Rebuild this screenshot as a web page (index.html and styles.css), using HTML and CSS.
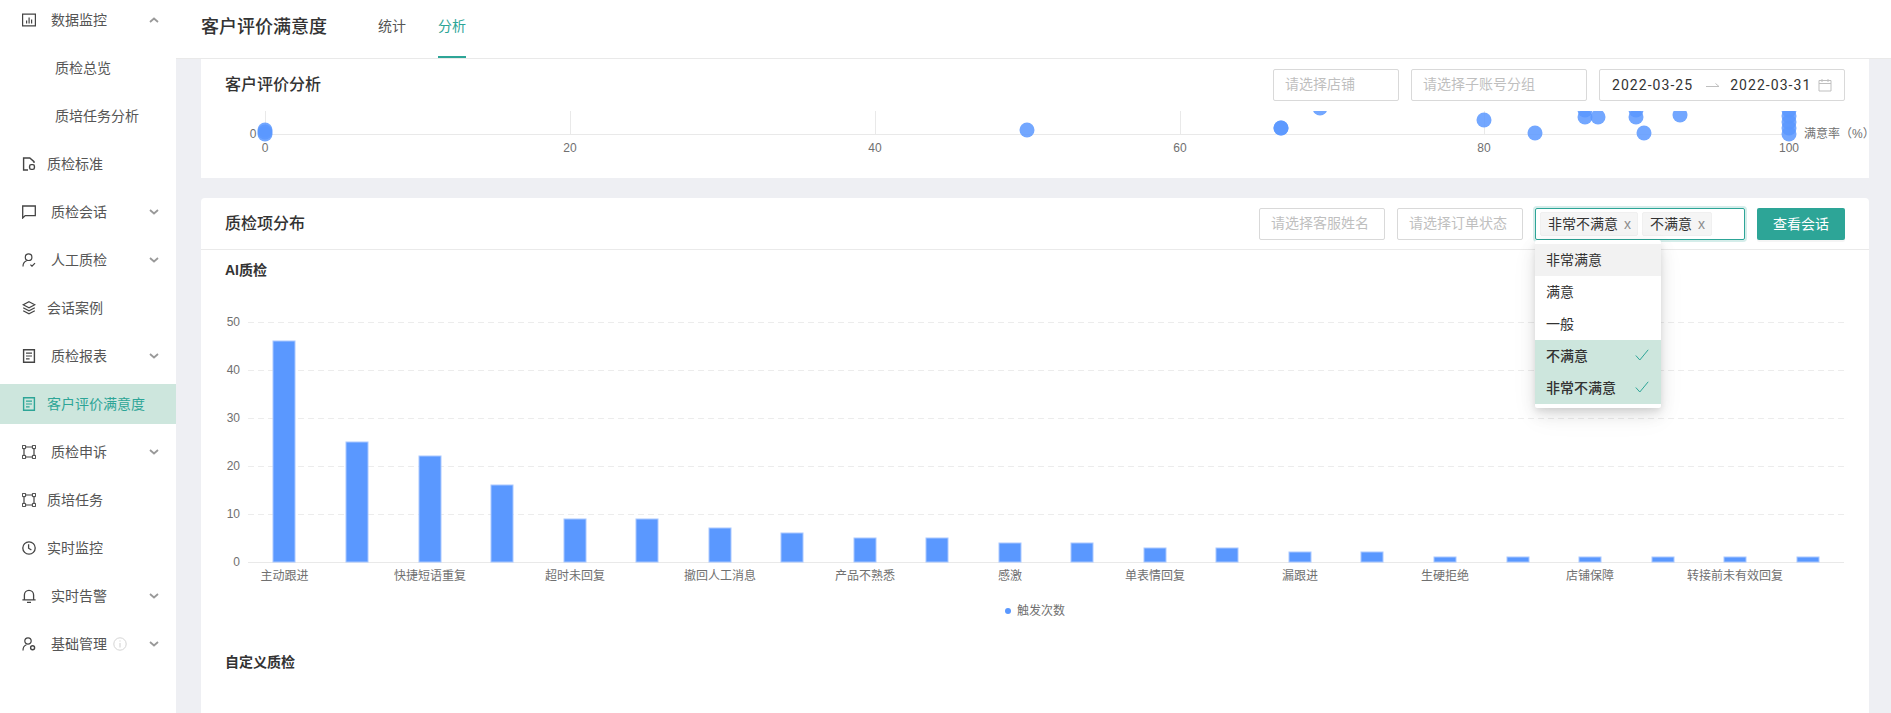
FILE: index.html
```html
<!DOCTYPE html>
<html lang="zh-CN">
<head>
  <meta charset="UTF-8">
  <meta name="viewport" content="width=device-width, initial-scale=1.0">
  <title>客户评价满意度</title>
  <link rel="stylesheet" href="styles.css">
</head>
<body>

  <!-- Sidebar -->
  <aside class="sidebar">
    <div class="menu-item has-sub">
      <svg class="menu-icon" viewBox="0 0 14 14"><path d="M.6 1.2h12.8v11.6H.6z" fill="none" stroke="currentColor" stroke-width="1.2"/><path d="M4 7.5h1.2v3H4zM6.5 4.5h1.2v6H6.5zM9 6.5h1.2v4H9z" fill="currentColor"/></svg>
      <span class="menu-label">数据监控</span>
      <svg class="chevron" viewBox="0 0 10 6"><path d="M1 5l4-3.5L9 5" fill="none" stroke="currentColor" stroke-width="1.8"/></svg>
    </div>
    <div class="menu-item sub-item"><span class="menu-label">质检总览</span></div>
    <div class="menu-item sub-item"><span class="menu-label">质培任务分析</span></div>
    <div class="menu-item">
      <svg class="menu-icon" viewBox="0 0 14 14"><path d="M6 13H1.6V1h6.2L12 4.6V6" fill="none" stroke="currentColor" stroke-width="1.4"/><rect x="7.6" y="7.6" width="4.8" height="4.8" rx="1.6" fill="none" stroke="currentColor" stroke-width="1.4"/></svg>
      <span class="menu-label">质检标准</span>
    </div>
    <div class="menu-item has-sub">
      <svg class="menu-icon" viewBox="0 0 14 14"><path d="M.7 13V1h12.6v9.6H3.2L.7 13z" fill="none" stroke="currentColor" stroke-width="1.3"/></svg>
      <span class="menu-label">质检会话</span>
      <svg class="chevron" viewBox="0 0 10 6"><path d="M1 1l4 3.5L9 1" fill="none" stroke="currentColor" stroke-width="1.8"/></svg>
    </div>
    <div class="menu-item has-sub">
      <svg class="menu-icon" viewBox="0 0 14 14"><circle cx="6.6" cy="4.2" r="3.3" fill="none" stroke="currentColor" stroke-width="1.2"/><path d="M1 13.4c0-3 1.6-4.8 3.6-5.6M8.4 11.6l1.6 1.6 3-3" fill="none" stroke="currentColor" stroke-width="1.2"/></svg>
      <span class="menu-label">人工质检</span>
      <svg class="chevron" viewBox="0 0 10 6"><path d="M1 1l4 3.5L9 1" fill="none" stroke="currentColor" stroke-width="1.8"/></svg>
    </div>
    <div class="menu-item">
      <svg class="menu-icon" viewBox="0 0 14 14"><path d="M7 .8l5.8 3L7 6.8l-5.8-3L7 .8z" fill="none" stroke="currentColor" stroke-width="1.2"/><path d="M1.2 6.8L7 9.8l5.8-3M1.2 9.8L7 12.9l5.8-3.1" fill="none" stroke="currentColor" stroke-width="1.2"/></svg>
      <span class="menu-label">会话案例</span>
    </div>
    <div class="menu-item has-sub">
      <svg class="menu-icon" viewBox="0 0 14 14"><path d="M1.6.8h10.8v12.4H1.6z" fill="none" stroke="currentColor" stroke-width="1.4"/><path d="M4 4.2h6M4 7h6M4 9.8h3.6" fill="none" stroke="currentColor" stroke-width="1.2"/></svg>
      <span class="menu-label">质检报表</span>
      <svg class="chevron" viewBox="0 0 10 6"><path d="M1 1l4 3.5L9 1" fill="none" stroke="currentColor" stroke-width="1.8"/></svg>
    </div>
    <div class="menu-item active">
      <svg class="menu-icon" viewBox="0 0 14 14"><path d="M1.6.8h10.8v12.4H1.6z" fill="none" stroke="currentColor" stroke-width="1.4"/><path d="M4 4.2h6M4 7h6M4 9.8h3.6" fill="none" stroke="currentColor" stroke-width="1.2"/></svg>
      <span class="menu-label">客户评价满意度</span>
    </div>
    <div class="menu-item has-sub">
      <svg class="menu-icon" viewBox="0 0 14 14"><path d="M2 2h10v10H2z" fill="none" stroke="currentColor" stroke-width="1.2"/><path d="M.4.4h3.2v3.2H.4zM10.4.4h3.2v3.2h-3.2zM.4 10.4h3.2v3.2H.4zM10.4 10.4h3.2v3.2h-3.2z" fill="#fff" stroke="currentColor" stroke-width="1"/></svg>
      <span class="menu-label">质检申诉</span>
      <svg class="chevron" viewBox="0 0 10 6"><path d="M1 1l4 3.5L9 1" fill="none" stroke="currentColor" stroke-width="1.8"/></svg>
    </div>
    <div class="menu-item">
      <svg class="menu-icon" viewBox="0 0 14 14"><path d="M2 2h10v10H2z" fill="none" stroke="currentColor" stroke-width="1.2"/><path d="M.4.4h3.2v3.2H.4zM10.4.4h3.2v3.2h-3.2zM.4 10.4h3.2v3.2H.4zM10.4 10.4h3.2v3.2h-3.2z" fill="#fff" stroke="currentColor" stroke-width="1"/></svg>
      <span class="menu-label">质培任务</span>
    </div>
    <div class="menu-item">
      <svg class="menu-icon" viewBox="0 0 14 14"><circle cx="7" cy="7" r="6.2" fill="none" stroke="currentColor" stroke-width="1.3"/><path d="M6.6 3.2v4l2.8 1.8" fill="none" stroke="currentColor" stroke-width="1.3"/></svg>
      <span class="menu-label">实时监控</span>
    </div>
    <div class="menu-item has-sub">
      <svg class="menu-icon" viewBox="0 0 14 14"><path d="M2.4 10.6V6a4.6 4.6 0 0 1 9.2 0v4.6M.4 10.8h13.2M5 13.4h4" fill="none" stroke="currentColor" stroke-width="1.3"/></svg>
      <span class="menu-label">实时告警</span>
      <svg class="chevron" viewBox="0 0 10 6"><path d="M1 1l4 3.5L9 1" fill="none" stroke="currentColor" stroke-width="1.8"/></svg>
    </div>
    <div class="menu-item has-sub">
      <svg class="menu-icon" viewBox="0 0 14 14"><circle cx="6" cy="4" r="3.2" fill="none" stroke="currentColor" stroke-width="1.2"/><path d="M1 13.4c0-3 1.4-4.8 3.4-5.6" fill="none" stroke="currentColor" stroke-width="1.2"/><circle cx="10.6" cy="10.8" r="2" fill="none" stroke="currentColor" stroke-width="1.4"/></svg>
      <span class="menu-label">基础管理</span>
      <svg class="info-icon" viewBox="0 0 14 14"><circle cx="7" cy="7" r="6.2" fill="none" stroke="currentColor"/><path d="M7 6v4.4M7 3.4v1.2" fill="none" stroke="currentColor" stroke-width="1.1"/></svg>
      <svg class="chevron" viewBox="0 0 10 6"><path d="M1 1l4 3.5L9 1" fill="none" stroke="currentColor" stroke-width="1.8"/></svg>
    </div>
  </aside>

  <div class="main">
    <!-- Top bar -->
    <header class="topbar">
      <div class="page-title">客户评价满意度</div>
      <nav class="tabs">
        <div class="tab">统计</div>
        <div class="tab tab-active">分析</div>
      </nav>
    </header>

    <div class="content">
      <!-- Satisfaction scatter -->
      <section class="card card-top">
        <div class="card-head">
          <div class="card-title">客户评价分析</div>
          <div class="filters">
            <input class="field field-shop" placeholder="请选择店铺">
            <input class="field field-group" placeholder="请选择子账号分组">
            <div class="date-range">
              <span>2022-03-25</span>
              <svg class="date-arrow" viewBox="0 0 14 6"><path d="M0 4.5h13L9.5 1.5" fill="none" stroke="currentColor"/></svg>
              <span>2022-03-31</span>
              <svg class="date-icon" viewBox="0 0 14 14"><path d="M1 2.5h12v10.500H1zM1 5.500h12M4 1v3M10 1v3" fill="none" stroke="currentColor"/></svg>
            </div>
          </div>
        </div>
        <svg class="scatter" viewBox="201 101 1668 77">
          <defs><clipPath id="plotClip"><rect x="201" y="111" width="1668" height="67"/></clipPath></defs>
          <path class="axis-line" d="M265 134.500H1790M265.500 111v23M570.500 111v23M875.500 111v23M1180.500 111v23M1484.500 111v23M1789.500 111v23"/>
          <g class="bubbles" clip-path="url(#plotClip)">
            <circle cx="265" cy="130" r="7.500"/><circle cx="265" cy="134" r="7.500"/><circle cx="265" cy="132" r="7.500"/>
            <circle cx="1027" cy="130" r="7.500"/>
            <circle cx="1281" cy="128" r="7.500"/><circle cx="1281" cy="128" r="7.500"/>
            <circle cx="1320" cy="108" r="7.500"/>
            <circle cx="1484" cy="120" r="7.500"/>
            <circle cx="1535" cy="133" r="7.500"/>
            <circle cx="1585" cy="117" r="7.500"/><circle cx="1585" cy="110" r="7.500"/>
            <circle cx="1598" cy="117" r="7.500"/>
            <circle cx="1636" cy="117" r="7.500"/><circle cx="1636" cy="110" r="7.500"/>
            <circle cx="1644" cy="133" r="7.500"/>
            <circle cx="1680" cy="115" r="7.500"/>
            <circle cx="1789" cy="134" r="7.500"/><circle cx="1789" cy="128" r="7.500"/><circle cx="1789" cy="122" r="7.500"/><circle cx="1789" cy="116" r="7.500"/><circle cx="1789" cy="110" r="7.500"/>
          </g>
          <g class="tick-text">
            <text x="253" y="138" text-anchor="middle">0</text>
            <text x="265" y="152" text-anchor="middle">0</text>
            <text x="570" y="152" text-anchor="middle">20</text>
            <text x="875" y="152" text-anchor="middle">40</text>
            <text x="1180" y="152" text-anchor="middle">60</text>
            <text x="1484" y="152" text-anchor="middle">80</text>
            <text x="1789" y="152" text-anchor="middle">100</text>
            <text x="1804" y="138">满意率（%）</text>
          </g>
        </svg>
      </section>

      <!-- Check item distribution -->
      <section class="card card-main">
        <div class="card-head card-head-line">
          <div class="card-title">质检项分布</div>
          <div class="filters">
            <input class="field field-shop" placeholder="请选择客服姓名">
            <input class="field field-shop" placeholder="请选择订单状态">
            <div class="select-wrap">
              <div class="multi-select">
                <span class="tag">非常不满意<i class="tag-x">x</i></span>
                <span class="tag">不满意<i class="tag-x">x</i></span>
              </div>
              <ul class="dropdown">
                <li class="option option-hover">非常满意</li>
                <li class="option">满意</li>
                <li class="option">一般</li>
                <li class="option option-on">不满意<svg class="check" viewBox="0 0 14 12"><path d="M.8 6.500l4 4.500L13.200.8" fill="none" stroke="currentColor"/></svg></li>
                <li class="option option-on">非常不满意<svg class="check" viewBox="0 0 14 12"><path d="M.8 6.500l4 4.500L13.200.8" fill="none" stroke="currentColor"/></svg></li>
              </ul>
            </div>
            <button class="primary-btn">查看会话</button>
          </div>
        </div>
        <div class="card-body">
          <div class="sub-title">AI质检</div>
          <svg class="bar-chart" viewBox="201 292 1668 350">
            <path class="grid-line" d="M248 322.500H1844M248 370.500H1844M248 418.500H1844M248 466.500H1844M248 514.500H1844"/>
            <path class="axis-line" d="M248 562.500H1844"/>
            <g class="bars">
              <rect x="273" y="341" width="22" height="221"/>
              <rect x="346" y="442" width="22" height="120"/>
              <rect x="419" y="456" width="22" height="106"/>
              <rect x="491" y="485" width="22" height="77"/>
              <rect x="564" y="519" width="22" height="43"/>
              <rect x="636" y="519" width="22" height="43"/>
              <rect x="709" y="528" width="22" height="34"/>
              <rect x="781" y="533" width="22" height="29"/>
              <rect x="854" y="538" width="22" height="24"/>
              <rect x="926" y="538" width="22" height="24"/>
              <rect x="999" y="543" width="22" height="19"/>
              <rect x="1071" y="543" width="22" height="19"/>
              <rect x="1144" y="548" width="22" height="14"/>
              <rect x="1216" y="548" width="22" height="14"/>
              <rect x="1289" y="552" width="22" height="10"/>
              <rect x="1361" y="552" width="22" height="10"/>
              <rect x="1434" y="557" width="22" height="5"/>
              <rect x="1507" y="557" width="22" height="5"/>
              <rect x="1579" y="557" width="22" height="5"/>
              <rect x="1652" y="557" width="22" height="5"/>
              <rect x="1724" y="557" width="22" height="5"/>
              <rect x="1797" y="557" width="22" height="5"/>
            </g>
            <g class="tick-text" text-anchor="end">
              <text x="240" y="326">50</text>
              <text x="240" y="374">40</text>
              <text x="240" y="422">30</text>
              <text x="240" y="470">20</text>
              <text x="240" y="518">10</text>
              <text x="240" y="566">0</text>
            </g>
            <g class="tick-text" text-anchor="middle">
              <text x="284.500" y="580">主动跟进</text>
              <text x="430" y="580">快捷短语重复</text>
              <text x="575" y="580">超时未回复</text>
              <text x="720" y="580">撤回人工消息</text>
              <text x="865" y="580">产品不熟悉</text>
              <text x="1010" y="580">感激</text>
              <text x="1155" y="580">单表情回复</text>
              <text x="1300" y="580">漏跟进</text>
              <text x="1445" y="580">生硬拒绝</text>
              <text x="1590" y="580">店铺保障</text>
              <text x="1735" y="580">转接前未有效回复</text>
              <text x="1041" y="615">触发次数</text>
            </g>
            <circle class="legend-dot" cx="1008" cy="611" r="3"/>
          </svg>
          <div class="sub-title sub-title-custom">自定义质检</div>
        </div>
      </section>
    </div>
  </div>

</body>
</html>
```

FILE: styles.css
```css
/* Overall page */
body {
  margin: 0;
  height: 100vh;
  display: flex;
  overflow: hidden;
  background-color: #eeeff3;
  color: #262626;
  font-family: "Liberation Sans", "Noto Sans CJK SC", sans-serif;
  font-size: 14px;
}

/* Sidebar */
.sidebar {
  width: 176px;
  flex-shrink: 0;
  background: #fff;
  overflow: hidden;
}

.menu-item {
  height: 48px;
  display: flex;
  align-items: center;
  padding: 0 17px 0 22px;
  color: #555;
}

.menu-item:first-child {
  margin-top: -4px;
}

.menu-icon {
  width: 14px;
  height: 14px;
  flex-shrink: 0;
  color: #444;
}

.menu-label {
  margin-left: 11px;
  padding-bottom: 2px;
  white-space: nowrap;
}

.has-sub .menu-label {
  margin-left: 15px;
}

.sub-item .menu-label {
  margin-left: 33px;
}

.chevron {
  width: 10px;
  height: 6px;
  margin-left: auto;
  color: #999;
}

.info-icon {
  width: 14px;
  height: 14px;
  margin-left: 6px;
  color: #d4d4d4;
}

.menu-item.active {
  height: 40px;
  margin: 4px 0;
  background-color: #cde6dd;
  color: #2da597;
}

.active .menu-icon {
  color: #2da597;
}

/* Right side */
.main {
  flex: 1;
  min-width: 0;
  display: flex;
  flex-direction: column;
}

.topbar {
  height: 58px;
  flex-shrink: 0;
  display: flex;
  padding-left: 25px;
  background: #fff;
  border-bottom: 1px solid #e9e9e9;
}

.page-title {
  width: 177px;
  font-size: 18px;
  font-weight: 500;
  line-height: 55px;
  color: #333;
}

.tabs {
  display: flex;
  gap: 32px;
}

.tab {
  width: 28px;
  height: 56px;
  line-height: 52px;
  color: #555;
}

.tab-active {
  color: #2da597;
  border-bottom: 2px solid #2da597;
}

.content {
  padding: 0 22px 0 25px;
}

/* Cards */
.card {
  background: #fff;
}

.card-top {
  height: 119px;
}

.card-main {
  margin-top: 20px;
  height: 520px;
  border-radius: 4px 4px 0 0;
}

.card-head {
  display: flex;
  align-items: center;
  justify-content: space-between;
  padding: 10px 24px 0;
}

.card-head-line {
  padding: 10px 24px 9px;
  border-bottom: 1px solid #eaeaea;
}

.card-title {
  padding-bottom: 4px;
  font-size: 16px;
  font-weight: 500;
  color: #333;
}

.filters {
  display: flex;
  gap: 12px;
}

/* Form fields */
.field {
  box-sizing: border-box;
  height: 32px;
  padding: 0 11px 2px;
  border: 1px solid #d9d9d9;
  border-radius: 2px;
  font-family: inherit;
  font-size: 14px;
}

.field::placeholder {
  color: #bfbfbf;
}

.field-shop {
  width: 126px;
}

.field-group {
  width: 176px;
}

.date-range {
  box-sizing: border-box;
  width: 246px;
  height: 32px;
  display: flex;
  align-items: center;
  padding: 0 12px;
  border: 1px solid #d9d9d9;
  border-radius: 2px;
  font-family: Roboto, "Liberation Sans", sans-serif;
  letter-spacing: 1.05px;
  white-space: nowrap;
  color: #333;
}

.date-arrow {
  width: 14px;
  height: 6px;
  flex-shrink: 0;
  margin: 0 10px 0 13px;
  color: #bfbfbf;
}

.date-icon {
  width: 14px;
  height: 14px;
  flex-shrink: 0;
  margin-left: auto;
  color: #bfbfbf;
}

.select-wrap {
  position: relative;
}

.multi-select {
  box-sizing: border-box;
  width: 210px;
  height: 32px;
  display: flex;
  align-items: center;
  gap: 4px;
  padding: 0 4px;
  border: 1px solid #2da597;
  border-radius: 2px;
  box-shadow: 0 0 0 2px rgba(45, 165, 151, 0.2);
}

.tag {
  height: 24px;
  display: flex;
  align-items: center;
  box-sizing: border-box;
  padding: 0 6px 2px 7px;
  background: #f5f5f5;
  border: 1px solid #f0f0f0;
  border-radius: 2px;
  color: #333;
}

.tag-x {
  margin-left: 6px;
  padding-top: 1px;
  font-style: normal;
  font-size: 14px;
  color: #8c8c8c;
}

/* Dropdown */
.dropdown {
  position: absolute;
  top: 32px;
  left: 0;
  z-index: 5;
  box-sizing: border-box;
  width: 126px;
  margin: 0;
  padding: 4px 0;
  list-style: none;
  background: #fff;
  border-radius: 2px;
  box-shadow: 0 6px 16px rgba(0, 0, 0, 0.1), 0 3px 6px rgba(0, 0, 0, 0.08), 0 9px 28px rgba(0, 0, 0, 0.05);
}

.option {
  box-sizing: border-box;
  height: 32px;
  display: flex;
  align-items: center;
  justify-content: space-between;
  padding: 0 12px 2px 11px;
  color: #333;
}

.option-hover {
  background: #f2f2f2;
}

.option-on {
  background: #cde6dd;
  font-weight: 500;
}

.check {
  width: 14px;
  height: 12px;
  color: #2da597;
}

.primary-btn {
  width: 88px;
  height: 32px;
  padding-bottom: 3px;
  border: none;
  border-radius: 2px;
  background-color: #2da597;
  color: #fff;
  font-family: inherit;
  font-size: 14px;
  box-shadow: 0 2px 0 rgba(0, 0, 0, 0.04);
}

/* Card body */
.card-body {
  padding-top: 12px;
}

.sub-title {
  height: 20px;
  padding-left: 24px;
  font-weight: 700;
  line-height: 16px;
  color: #333;
}

.sub-title-custom {
  margin-top: 12px;
}

/* Charts */
.scatter {
  display: block;
  width: 1668px;
  height: 77px;
  overflow: visible;
}

.bar-chart {
  display: block;
  width: 1668px;
  height: 350px;
  margin-top: 10px;
}

.axis-line {
  fill: none;
  stroke: #e9e9e9;
}

.grid-line {
  fill: none;
  stroke: #ececec;
  stroke-dasharray: 6 4;
}

.bars rect {
  fill: #5a98ff;
  stroke: #a9c8ff;
  stroke-width: 1;
}

.bubbles circle {
  fill: #5a98ff;
  fill-opacity: 0.85;
}

.legend-dot {
  fill: #5a98ff;
}

.tick-text text {
  font-size: 12px;
  fill: #707070;
}
```
